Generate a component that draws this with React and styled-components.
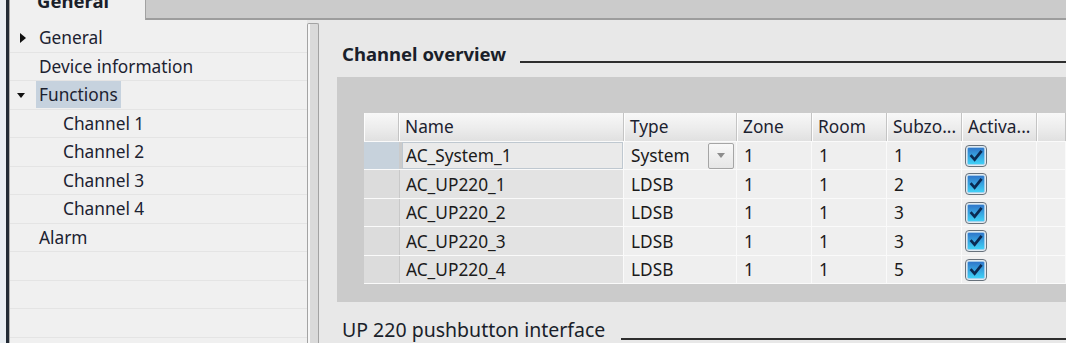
import React from "react";
import styled, { createGlobalStyle } from "styled-components";

const GlobalStyle = createGlobalStyle`
  html, body {
    margin: 0;
    padding: 0;
    background: #e8e8e8;
  }
  body {
    font-family: "Noto Sans", "Open Sans", sans-serif;
    color: #1b1b1b;
  }
  * {
    box-sizing: border-box;
  }
`;

const navItems = [
  { label: "General", arrow: "right" },
  { label: "Device information" },
  { label: "Functions", arrow: "down", selected: true },
  { label: "Channel 1", child: true },
  { label: "Channel 2", child: true },
  { label: "Channel 3", child: true },
  { label: "Channel 4", child: true },
  { label: "Alarm" },
  {},
  {},
  {},
  {},
];

const channels = [
  { name: "AC_System_1", type: "System", zone: 1, room: 1, sub: 1, focused: true },
  { name: "AC_UP220_1", type: "LDSB", zone: 1, room: 1, sub: 2 },
  { name: "AC_UP220_2", type: "LDSB", zone: 1, room: 1, sub: 3 },
  { name: "AC_UP220_3", type: "LDSB", zone: 1, room: 1, sub: 3 },
  { name: "AC_UP220_4", type: "LDSB", zone: 1, room: 1, sub: 5 },
];

const columns = ["", "Name", "Type", "Zone", "Room", "Subzo...", "Activa...", ""];

function CheckBox() {
  return (
    <svg width="22" height="22" viewBox="0 0 22 22">
      <defs>
        <linearGradient id="cbFill" x1="0" y1="0" x2="0" y2="1">
          <stop offset="0" stopColor="#2f74c9" />
          <stop offset="1" stopColor="#40d3f7" />
        </linearGradient>
      </defs>
      <rect x="0.5" y="0.5" width="21" height="21" rx="3.5" fill="#e6ecf1" stroke="#67717b" />
      <rect x="2.4" y="2.4" width="17.2" height="17.2" rx="1.6" fill="url(#cbFill)" stroke="#a9d0ee" strokeWidth="0.8" />
      <path d="M5.6 10.2 L9.6 14.6 L16.6 5.8" fill="none" stroke="#0b2a52" strokeWidth="2.7" />
    </svg>
  );
}

export default function App() {
  return (
    <>
      <GlobalStyle />
      <Frame>
        <EdgeStrip />
        <Main>
          <TabBar>
            <Tab>General</Tab>
          </TabBar>
          <Body>
            <Nav>
              {navItems.map((item, i) => (
                <NavRow key={i} $child={item.child}>
                  <Toggle>{item.arrow && <Arrow $dir={item.arrow} />}</Toggle>
                  {item.label && <Label $selected={item.selected}>{item.label}</Label>}
                </NavRow>
              ))}
            </Nav>
            <ScrollTrack />
            <Content>
              <SectionHead $top={22.8}>
                <SectionTitle $bold>Channel overview</SectionTitle>
                <Rule $gap={14} $drop={1.5} />
              </SectionHead>
              <Panel>
                <HeadRow>
                  {columns.map((c, i) => (
                    <HeadCell key={i}>{c}</HeadCell>
                  ))}
                </HeadRow>
                {channels.map((ch) => (
                  <DataRow key={ch.name}>
                    <RowHead $selected={ch.focused} />
                    <NameCell $focused={ch.focused}>{ch.name}</NameCell>
                    <Cell>
                      {ch.type}
                      {ch.focused && (
                        <DropButton>
                          <DropArrow />
                        </DropButton>
                      )}
                    </Cell>
                    <Cell>{ch.zone}</Cell>
                    <Cell>{ch.room}</Cell>
                    <Cell>{ch.sub}</Cell>
                    <Cell $check>
                      <CheckBox />
                    </Cell>
                    <Cell />
                  </DataRow>
                ))}
              </Panel>
              <SectionHead $top={17.4}>
                <SectionTitle>UP 220 pushbutton interface</SectionTitle>
                <Rule $gap={16} $drop={1} />
              </SectionHead>
            </Content>
          </Body>
        </Main>
      </Frame>
    </>
  );
}

const Frame = styled.div`
  display: flex;
  width: 1066px;
  height: 343px;
  overflow: hidden;
`;

const EdgeStrip = styled.div`
  width: 9px;
  flex: none;
  background: #e9eef3;
  border-right: 3px solid #222b36;
`;

const Main = styled.div`
  flex: 1;
  min-width: 0;
  display: flex;
  flex-direction: column;
`;

const TabBar = styled.div`
  height: 20px;
  flex: none;
  display: flex;
  align-items: flex-end;
  overflow: hidden;
  background: #cbcbcb;
  box-shadow: inset 0 -2px 0 #9d9d9d;
`;

const Tab = styled.div`
  flex: none;
  width: 137px;
  height: 32px;
  padding: 1px 0 0 27px;
  background: #f0f0f0;
  border: 1px solid #a2a2a2;
  border-bottom: none;
  font-size: 18.5px;
  font-weight: 700;
  line-height: 22px;
  color: #1a1f2a;
`;

const Body = styled.div`
  flex: 1;
  min-height: 0;
  display: flex;
`;

const Nav = styled.nav`
  width: 298px;
  flex: none;
  padding-top: 4px;
  background: #f0f0f0;
  border-left: 1px solid #b0b0b0;
`;

const NavRow = styled.div`
  height: 28.5px;
  display: flex;
  align-items: center;
  padding-left: ${(p) => (p.$child ? 31 : 7)}px;
  border-bottom: 1px solid #e4e4e4;
  font-size: 17.3px;
  color: #1c2230;
`;

const Toggle = styled.span`
  width: 19px;
  flex: none;
  display: flex;
  align-items: center;
`;

const Arrow = styled.span`
  width: 0;
  height: 0;
  ${(p) =>
    p.$dir === "right"
      ? `margin-left: 3px;
         border-left: 6px solid #111;
         border-top: 5px solid transparent;
         border-bottom: 5px solid transparent;`
      : `margin-top: 1px;
         border-top: 5px solid #111;
         border-left: 4.5px solid transparent;
         border-right: 4.5px solid transparent;`}
`;

const Label = styled.span`
  height: 27px;
  line-height: 27px;
  padding: 0 3px;
  white-space: nowrap;
  background: ${(p) => (p.$selected ? "#c6d2de" : "transparent")};
`;

const ScrollTrack = styled.div`
  width: 12px;
  flex: none;
  margin-top: 3px;
  border: 1px solid #a3a3a3;
  border-bottom: none;
  border-radius: 2px 2px 0 0;
  background: linear-gradient(to right, #f7f7f7 0 2px, #dadada 2px);
`;

const Content = styled.main`
  flex: 1;
  min-width: 0;
  display: flex;
  flex-direction: column;
  padding-left: 18px;
  background: #e8e8e8;
`;

const SectionHead = styled.div`
  flex: none;
  display: flex;
  align-items: flex-end;
  margin: ${(p) => p.$top}px 0 0 5px;
`;

const SectionTitle = styled.h2`
  margin: 0;
  font-size: ${(p) => (p.$bold ? 18.5 : 19.5)}px;
  font-weight: ${(p) => (p.$bold ? 700 : 400)};
  line-height: 22px;
  white-space: nowrap;
  color: #1a1f2a;
`;

const Rule = styled.div`
  flex: 1;
  height: 2px;
  margin: 0 0 ${(p) => p.$drop}px ${(p) => p.$gap}px;
  background: #2e2e2e;
`;

const Panel = styled.section`
  flex: none;
  height: 225px;
  margin-top: 12px;
  padding: 36px 0 0 27px;
  overflow: hidden;
  background: #cbcbcb;
`;

const Grid = styled.div`
  display: grid;
  grid-template-columns: 35px 225px 113px 75px 75px 75px 75px 1fr;
  font-size: 17.3px;
  white-space: nowrap;
`;

const HeadRow = styled(Grid)`
  height: 29px;
  border-bottom: 1px solid #fafafa;
`;

const HeadCell = styled.div`
  overflow: hidden;
  padding-left: 6px;
  line-height: 27px;
  background: linear-gradient(#f8f8f8, #ececec 55%, #e0e0e0);
  border-right: 1px solid #c4c4c4;
  box-shadow: inset 1px 0 0 #fdfdfd;
  color: #1c2230;
`;

const DataRow = styled(Grid)`
  height: 28.5px;
  border-bottom: 1px solid #fafafa;
`;

const RowHead = styled.div`
  background: ${(p) => (p.$selected ? "#c7d2dc" : "#dcdcdc")};
`;

const Cell = styled.div`
  display: flex;
  align-items: center;
  justify-content: ${(p) => (p.$check ? "flex-start" : "space-between")};
  padding: 0 2px 0 ${(p) => (p.$check ? 3 : 7)}px;
  background: #efefef;
  border-right: 1px solid #fafafa;
  overflow: hidden;
`;

const NameCell = styled(Cell)`
  margin-left: ${(p) => (p.$focused ? 3 : 0)}px;
  padding-left: ${(p) => (p.$focused ? 4 : 7)}px;
  background: ${(p) => (p.$focused ? "#eaeaea" : "#e3e3e3")};
  box-shadow: ${(p) =>
    p.$focused ? "inset 0 0 0 1px #bfc8d0" : "inset 1px 0 0 #c9c9c9"};
`;

const DropButton = styled.span`
  width: 26px;
  height: 26px;
  flex: none;
  display: flex;
  align-items: center;
  justify-content: center;
  border: 1px solid #a5a5a5;
  border-radius: 2px;
  background: linear-gradient(#f8f8f8, #e6e6e6);
`;

const DropArrow = styled.span`
  width: 0;
  height: 0;
  border-top: 5px solid #8d8d8d;
  border-left: 4.5px solid transparent;
  border-right: 4.5px solid transparent;
`;
